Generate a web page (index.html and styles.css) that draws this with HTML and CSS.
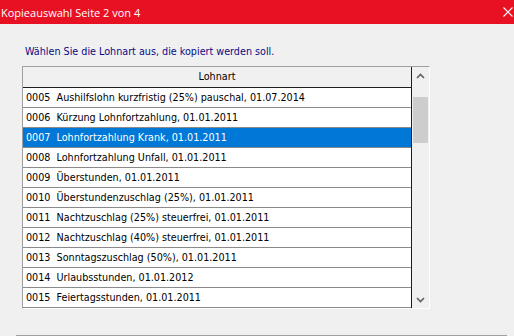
FILE: index.html
```html
<!DOCTYPE html>
<html lang="de">
<head>
  <meta charset="UTF-8">
  <title>Kopieauswahl Seite 2 von 4</title>
  <link rel="stylesheet" href="styles.css">
</head>
<body>

  <div class="titlebar">
    <span class="titel">Kopieauswahl Seite 2 von 4</span>
    <svg class="schliessen" width="10" height="10" viewBox="0 0 10 10">
      <path d="M0.5 0.5 L9.5 9.5 M9.5 0.5 L0.5 9.5" stroke="#fff" stroke-width="1.1" fill="none"/>
    </svg>
  </div>

  <div class="inhalt">
    <p class="hinweis">Wählen Sie die Lohnart aus, die kopiert werden soll.</p>

    <div class="liste">
      <div class="tabelle">
        <div class="kopf">Lohnart</div>
        <div class="zeile">0005&nbsp; Aushilfslohn kurzfristig (25%) pauschal, 01.07.2014</div>
        <div class="zeile">0006&nbsp; Kürzung Lohnfortzahlung, 01.01.2011</div>
        <div class="zeile aktiv">0007&nbsp; Lohnfortzahlung Krank, 01.01.2011</div>
        <div class="zeile">0008&nbsp; Lohnfortzahlung Unfall, 01.01.2011</div>
        <div class="zeile">0009&nbsp; Überstunden, 01.01.2011</div>
        <div class="zeile">0010&nbsp; Überstundenzuschlag (25%), 01.01.2011</div>
        <div class="zeile">0011&nbsp; Nachtzuschlag (25%) steuerfrei, 01.01.2011</div>
        <div class="zeile">0012&nbsp; Nachtzuschlag (40%) steuerfrei, 01.01.2011</div>
        <div class="zeile">0013&nbsp; Sonntagszuschlag (50%), 01.01.2011</div>
        <div class="zeile">0014&nbsp; Urlaubsstunden, 01.01.2012</div>
        <div class="zeile">0015&nbsp; Feiertagsstunden, 01.01.2011</div>
      </div>

      <!-- Bildlaufleiste -->
      <div class="scrollbar">
        <div class="pfeil">
          <svg width="9" height="6" viewBox="0 0 9 6"><path d="M1 5 L4.5 1.5 L8 5" stroke="#606060" stroke-width="1.6" fill="none"/></svg>
        </div>
        <div class="spur">
          <div class="griff"></div>
        </div>
        <div class="pfeil">
          <svg width="9" height="6" viewBox="0 0 9 6"><path d="M1 1 L4.5 4.5 L8 1" stroke="#606060" stroke-width="1.6" fill="none"/></svg>
        </div>
      </div>
    </div>
  </div>

  <div class="trenner"></div>

</body>
</html>
```

FILE: styles.css
```css
body {
  margin: 0;
  background: #f0f0f0;
  font-family: "DejaVu Sans Condensed", "DejaVu Sans", sans-serif;
  font-size: 10.7px;
  height: 336px;
  overflow: hidden;
}

.titlebar {
  height: 24px;
  background: #e81123;
  color: #fff;
  display: flex;
  align-items: center;
  justify-content: space-between;
  padding: 0 1px 0 1px;
}

.titel {
  font-family: "Open Sans", sans-serif;
  font-size: 11px;
}

.schliessen {
  margin-top: -1px;
}

.inhalt {
  padding-left: 22px;
}

.hinweis {
  margin: 0;
  padding: 21px 0 0 3px;
  height: 21px;
  line-height: 13px;
  color: #0a0a84;
}

.liste {
  width: 406px;
  display: flex;
  border-top: 1px solid #a0a0a0;
  border-left: 1px solid #a0a0a0;
  border-right: 1px solid #ffffff;
  border-bottom: 1px solid #ffffff;
}

.tabelle {
  width: 388px;
  background: #fff;
  border-right: 1px solid #1e1e1e;
}

.kopf {
  height: 20px;
  line-height: 20px;
  text-align: center;
  background: #f0f0f0;
  border-bottom: 1px solid #1e1e1e;
  color: #000;
}

.zeile {
  height: 19px;
  line-height: 19px;
  padding-left: 3px;
  border-bottom: 1px solid #8a8a8a;
  color: #000;
  white-space: nowrap;
}

.zeile.aktiv {
  background: #0078d7;
  color: #fff;
}

.scrollbar {
  width: 17px;
  background: #f0f0f0;
  display: flex;
  flex-direction: column;
}

.pfeil {
  height: 17px;
  display: flex;
  align-items: center;
  justify-content: center;
}

.spur {
  flex: 1;
  padding-top: 13px;
}

.griff {
  width: 15px;
  height: 46px;
  margin: 0 auto;
  background: #cdcdcd;
}

.trenner {
  margin: 26px 7px 0 16px;
  border-top: 1px solid #a0a0a0;
}
```
